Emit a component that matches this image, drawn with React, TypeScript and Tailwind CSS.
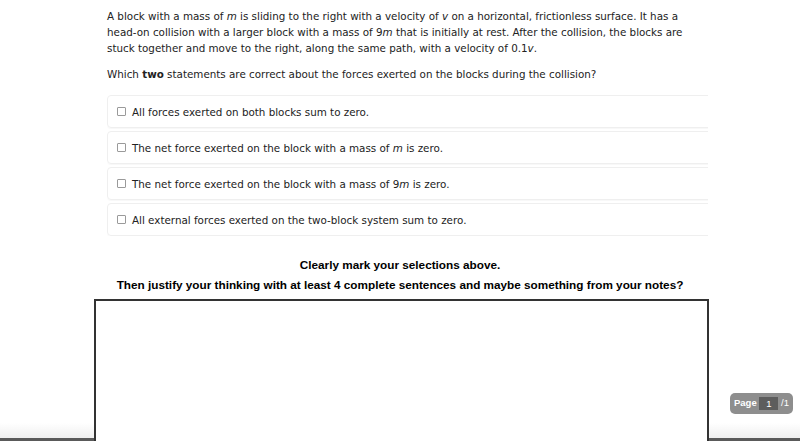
import React from "react"

const options: React.ReactNode[] = [
    <>All forces exerted on both blocks sum to zero.</>,
    <>The net force exerted on the block with a mass of <i>m</i> is zero.</>,
    <>The net force exerted on the block with a mass of 9<i>m</i> is zero.</>,
    <>All external forces exerted on the two-block system sum to zero.</>,
]

export default function App() {
    return (
        <div className="relative w-[800px] h-[441px] overflow-hidden bg-white">
            {/* bottom fade + edge */}
            <div className="absolute left-0 right-0 bottom-0 h-[18px] bg-gradient-to-b from-white to-[#ececec]"></div>
            <div className="absolute left-0 right-0 bottom-0 h-[3px] bg-[#5a5a5a]"></div>

            <div className="relative">
                <div className="ml-[107px] w-[601px] pt-[8px] font-['DejaVu_Sans',sans-serif] text-[10.35px] leading-[16px] text-[#222]">
                    <p>
                        A block with a mass of <i>m</i> is sliding to the right with a velocity of <i>v</i> on a horizontal, frictionless surface. It has a head-on collision with a larger block with a mass of 9<i>m</i> that is initially at rest. After the collision, the blocks are stuck together and move to the right, along the same path, with a velocity of 0.1<i>v</i>.
                    </p>
                    <p className="mt-[10px]">
                        Which <b>two</b> statements are correct about the forces exerted on the blocks during the collision?
                    </p>

                    <div className="mt-[13px] overflow-hidden flex flex-col gap-[3px]">
                        {options.map((opt, i) => (
                            <div key={i} className="w-[620px] h-[33px] flex items-center gap-[6px] pl-[9px] rounded-[4px] border border-[#efefef] shadow-[0_1px_1px_rgba(0,0,0,0.03)]">
                                <span className="w-[9px] h-[9px] border border-[#9a9a9a] rounded-[1px] bg-white"></span>
                                <span>{opt}</span>
                            </div>
                        ))}
                    </div>
                </div>

                <div className="mt-[19px] font-['Liberation_Sans',Arial,sans-serif] font-bold text-[11.75px] text-black text-center">
                    <p className="leading-[20px]">Clearly mark your selections above.</p>
                    <p className="leading-[20px]">Then justify your thinking with at least 4 complete sentences and maybe something from your notes?</p>
                </div>

                <div className="ml-[94px] mt-[4px] w-[615px] h-[200px] border-2 border-[#333] bg-white"></div>
            </div>

            {/* page indicator */}
            <div className="absolute left-[730px] top-[393px] w-[63px] h-[21px] rounded-[5px] bg-[#8e8e8e] flex items-center justify-between px-[4px] whitespace-nowrap font-['Liberation_Sans',Arial,sans-serif] text-[9.5px] text-white">
                <span className="font-bold">Page</span>
                <span className="w-[19px] h-[13px] bg-[#5d5d5d] text-center leading-[13px]">1</span>
                <span>/1</span>
            </div>
        </div>
    )
}
